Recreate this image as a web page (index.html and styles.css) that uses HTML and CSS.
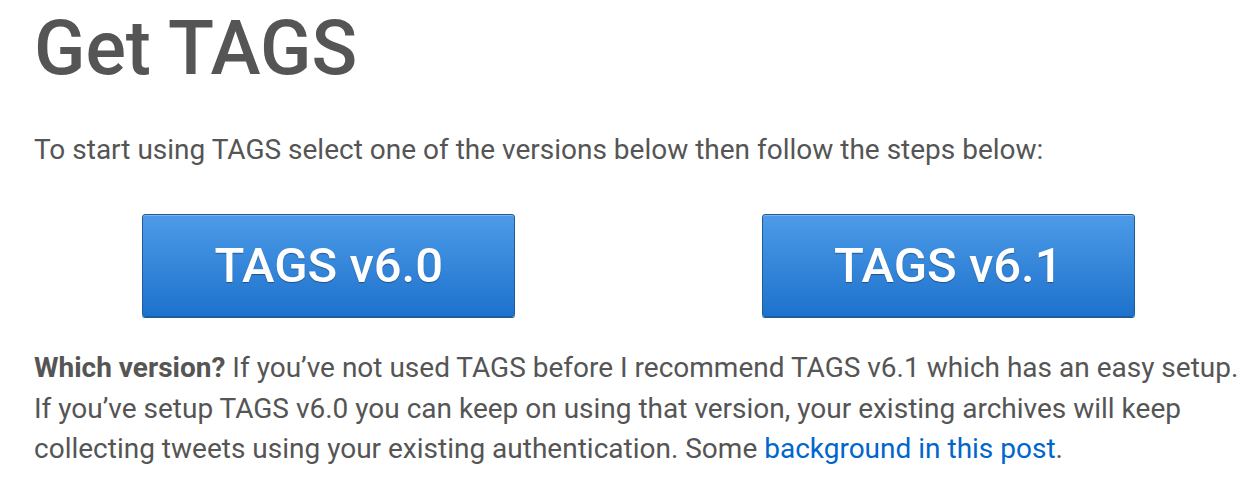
FILE: index.html
```html
<!DOCTYPE html>
<html>
<head>
<meta charset="utf-8">
<link rel="stylesheet" href="styles.css">
</head>
<body>
<main class="page">
  <h1 class="title">Get TAGS</h1>
  <p class="intro">To start using TAGS select one of the versions below then follow the steps below:</p>
  <div class="versions">
    <div class="col"><a class="btn" href="#">TAGS v6.0</a></div>
    <div class="col"><a class="btn" href="#">TAGS v6.1</a></div>
  </div>
  <p class="note"><strong>Which version?</strong> If you’ve not used TAGS before I recommend TAGS v6.1 which has an easy setup. If you’ve setup TAGS v6.0 you can keep on using that version, your existing archives will keep collecting tweets using your existing authentication. Some <a class="link" href="#">background in this post</a>.</p>
</main>
</body>
</html>
```
FILE: styles.css
```css
html, body {
  margin: 0;
  padding: 0;
  background: #fff;
}
.page {
  font-family: Roboto, "Noto Sans", sans-serif;
  color: #555;
  padding: 6px 17px 0 34px;
  width: 1209px;
}
.title {
  margin: 0;
  font-size: 75.5px;
  font-weight: 500;
  line-height: 84px;
  color: #555;
}
.intro {
  margin: 40px 0 0;
  font-size: 28px;
  line-height: 40px;
}
.versions {
  display: grid;
  grid-template-columns: 1fr 1fr;
  gap: 30px;
  margin-top: 44px;
}
.col {
  display: flex;
  justify-content: center;
}
.btn {
  display: flex;
  align-items: center;
  justify-content: center;
  width: 371px;
  height: 101px;
  border: 1px solid #1e5c9b;
  border-radius: 3px;
  background: linear-gradient(to bottom, #4d9be8 0%, #1d72cc 100%);
  box-shadow: inset 0 1px 0 rgba(255,255,255,0.25), 0 1px 0 #1e5c9b;
  color: #fff;
  text-decoration: none;
  font-size: 49px;
  font-weight: 500;
  text-shadow: 0 1px 1px rgba(0,0,0,0.35);
}
.note {
  margin: 31px 0 0;
  font-size: 28px;
  line-height: 40.5px;
}
.note strong {
  font-weight: 700;
}
.link {
  color: #0066cc;
  text-decoration: none;
}
```
